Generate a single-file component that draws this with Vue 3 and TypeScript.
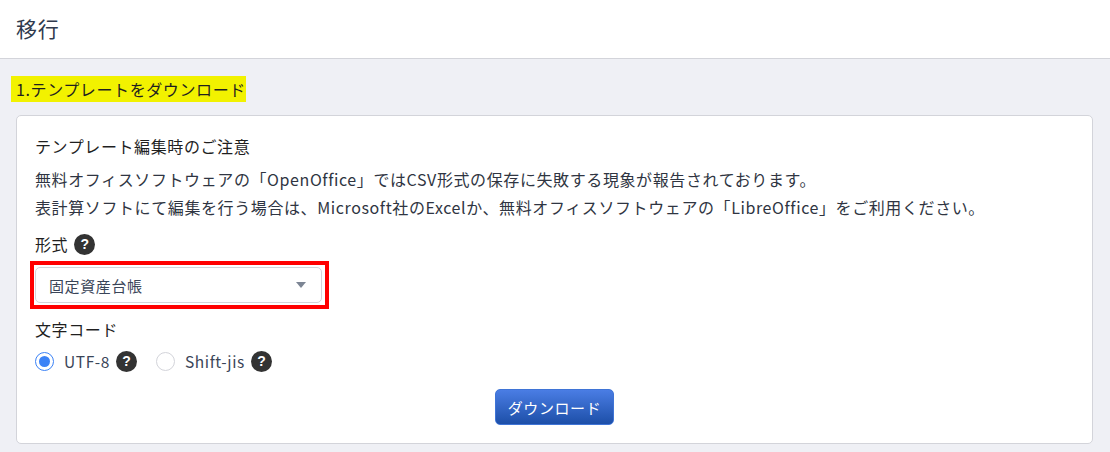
<script setup lang="ts">
const lines: string[] = [
  '無料オフィスソフトウェアの「OpenOffice」ではCSV形式の保存に失敗する現象が報告されております。',
  '表計算ソフトにて編集を行う場合は、Microsoft社のExcelか、無料オフィスソフトウェアの「LibreOffice」をご利用ください。'
]
</script>

<template>
  <div class="page">
    <header class="top"><h1>移行</h1></header>
    <main class="body">
      <h2 class="step"><span>1.テンプレートをダウンロード</span></h2>
      <section class="card">
        <h3 class="note-title">テンプレート編集時のご注意</h3>
        <p v-for="l in lines" :key="l" class="note">{{ l }}</p>
        <div class="label first">形式<span class="help">?</span></div>
        <div class="outline">
          <div class="select">
            <span>固定資産台帳</span>
            <i class="caret"></i>
          </div>
        </div>
        <div class="label second">文字コード</div>
        <div class="radios">
          <span class="radio on"></span><span class="rl">UTF-8</span><span class="help">?</span>
          <span class="radio off"></span><span class="rl">Shift-jis</span><span class="help">?</span>
        </div>
        <div class="actions"><button class="btn">ダウンロード</button></div>
      </section>
    </main>
  </div>
</template>

<style>
html, body { margin: 0; background: #eff0f5; }
</style>

<style scoped>
.page {
  width: 1110px; height: 452px; overflow: hidden; background: #eff0f5; color: #333;
  font-family: "Noto Sans CJK JP", "Noto Sans", sans-serif; font-size: 16px; letter-spacing: 0.6px;
}
.top { height: 58px; background: #fff; border-bottom: 1px solid #d3d4da; display: flex; align-items: center; padding-left: 16px; }
.top h1 { margin: 0 0 2px; font-size: 21px; font-weight: 400; color: #2f3a4e; line-height: 1; letter-spacing: 0.8px; }
.body { padding: 17px 17px 0 16px; }
.step { margin: 0 0 13px -5px; font-size: 16px; font-weight: 400; line-height: 26px; height: 26px; color: #1f1f1f; }
.step span { display: inline-block; background: #f2f200; padding-left: 5px; }
.card { background: #fff; border: 1px solid #d3d4da; border-radius: 5px; padding: 18px 18px 18px; height: 329px; box-sizing: border-box; }
.note-title { margin: 0 0 7px; font-size: 16px; font-weight: 400; line-height: 25px; height: 24px; color: #1f1f1f; }
.note { margin: 0; font-size: 16px; line-height: 28px; color: #2f3542; }
.label { font-size: 16px; font-weight: 400; line-height: 24px; display: flex; align-items: center; color: #1f1f1f; }
.first { margin-top: 11px; }
.second { margin-top: 8px; }
.help { width: 21px; height: 21px; border-radius: 50%; background: #333; color: #fff; font-size: 14px; font-weight: 700; display: inline-flex; align-items: center; justify-content: center; margin-left: 6px; line-height: 1; font-family: "Liberation Sans", sans-serif; letter-spacing: 0; }
.outline { width: 287px; margin: 5px 0 0 -5px; border: 4px solid #f00; height: 36px; padding: 2px 3px 2px 1px; box-sizing: content-box; }
.select { height: 36px; box-sizing: border-box; border: 1px solid #d3d4da; border-radius: 5px; display: flex; align-items: center; justify-content: space-between; padding: 0 15px 0 13px; font-size: 15px; color: #3a4558; width: 287px; }
.caret { width: 0; height: 0; border-left: 5px solid transparent; border-right: 5px solid transparent; border-top: 6px solid #7c8594; }
.radios { display: flex; align-items: center; margin-top: 8px; height: 24px; color: #3a4558; }
.radio { width: 19px; height: 19px; box-sizing: border-box; border-radius: 50%; border: 1px solid #d3d4da; background: #fff; display: inline-flex; align-items: center; justify-content: center; }
.radio.on { border-color: #3b82f6; }
.radio.on::after { content: ""; width: 11px; height: 11px; border-radius: 50%; background: #3b82f6; }
.radio.off { margin-left: 19px; }
.rl { margin-left: 10px; font-size: 15.5px; }
.actions { display: flex; justify-content: center; margin-top: 16px; }
.btn { width: 119px; height: 36px; border: 1px solid #3f74d6; border-radius: 5px; background: linear-gradient(#4a7de4, #1d4fa8); color: #fff; font-family: inherit; font-size: 15px; font-weight: 400; letter-spacing: 0.6px; padding: 0; }
</style>
